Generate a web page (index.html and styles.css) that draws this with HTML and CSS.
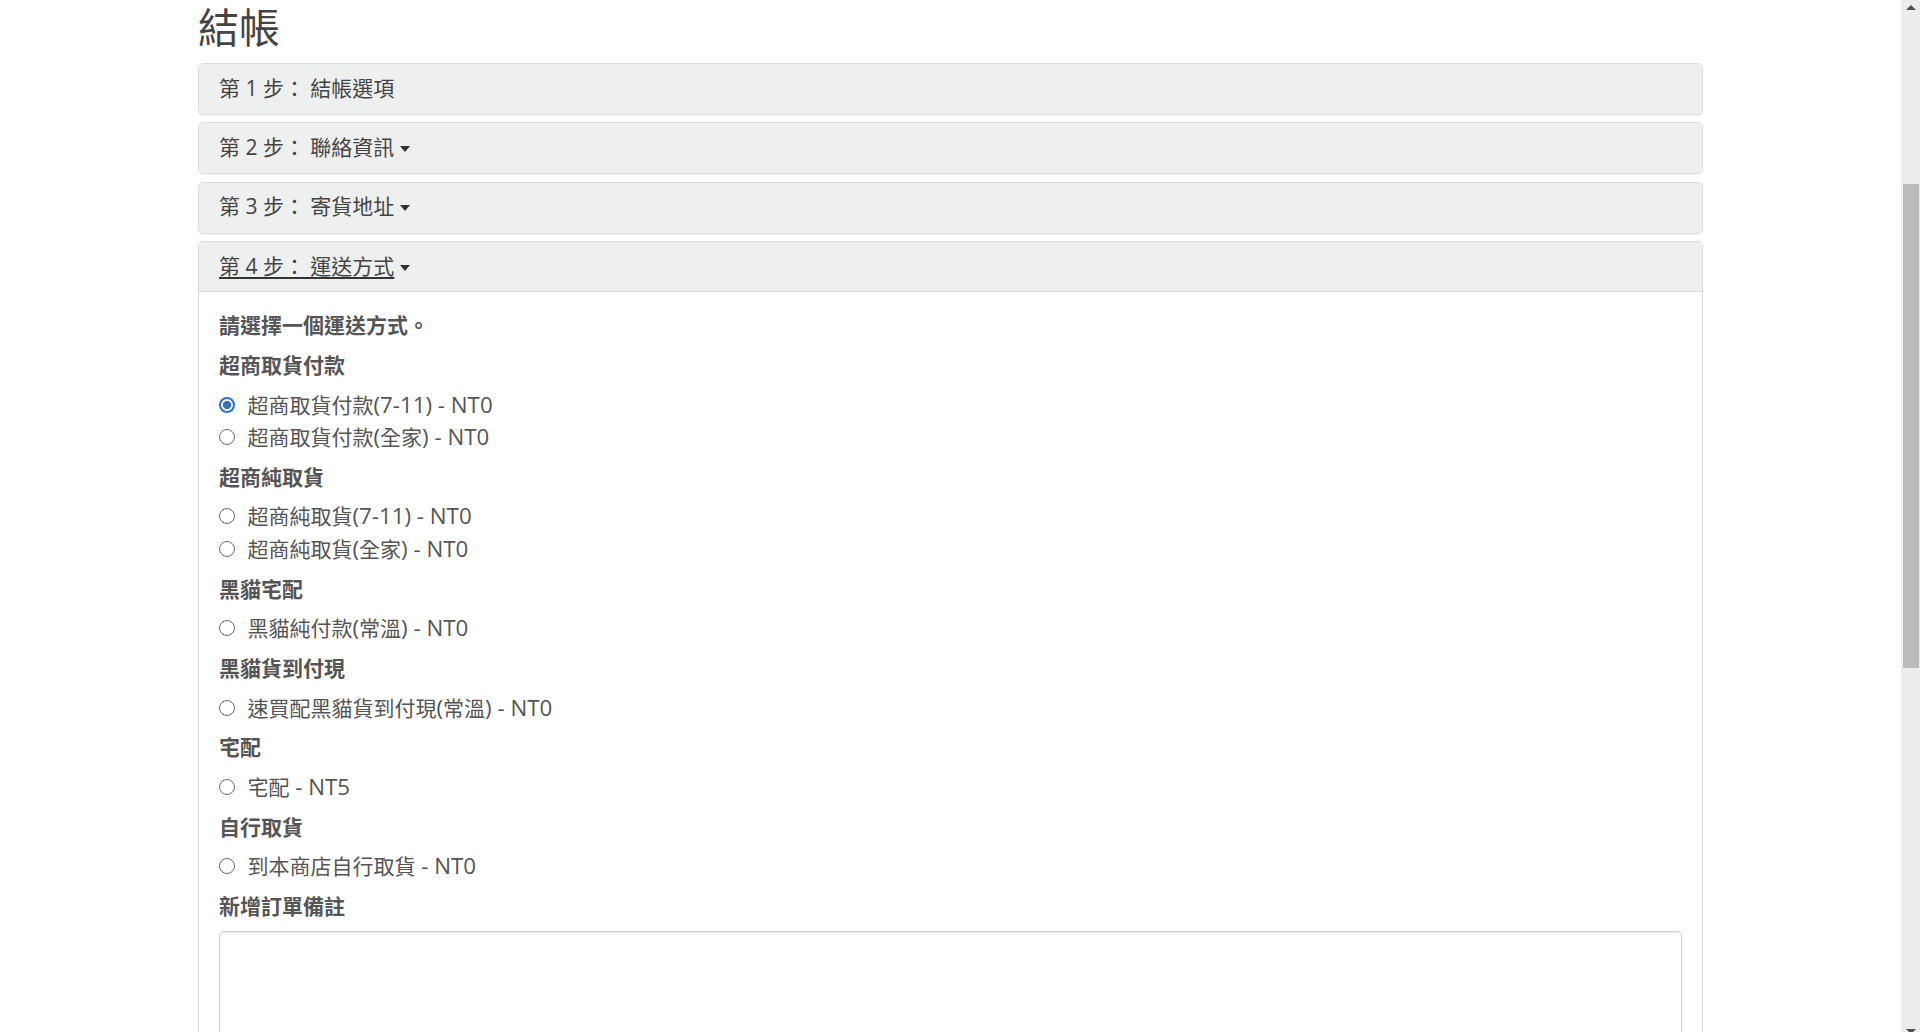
FILE: index.html
```html
<!DOCTYPE html>
<html lang="zh-Hant">
<head>
<meta charset="utf-8">
<title>結帳</title>
<link rel="stylesheet" href="styles.css">
</head>
<body>
<div class="page">
  <main class="viewport">
    <div class="container">
      <h1 class="page-title">結帳</h1>
      <div class="panel-group">
        <div class="panel">
          <div class="panel-heading"><span class="panel-title">第 1 步： 結帳選項</span></div>
        </div>
        <div class="panel">
          <div class="panel-heading"><a class="panel-title">第 2 步： 聯絡資訊</a><i class="caret"></i></div>
        </div>
        <div class="panel">
          <div class="panel-heading"><a class="panel-title">第 3 步： 寄貨地址</a><i class="caret"></i></div>
        </div>
        <div class="panel panel-open">
          <div class="panel-heading"><a class="panel-title is-hover">第 4 步： 運送方式</a><i class="caret"></i></div>
          <div class="panel-body">
            <p class="line strong">請選擇一個運送方式。</p>

            <p class="line strong">超商取貨付款</p>
            <div class="radio-group">
              <label class="radio line"><input type="radio" name="shipping" checked><span>超商取貨付款<span class="latin">(7-11) - NT0</span></span></label>
              <label class="radio line"><input type="radio" name="shipping"><span>超商取貨付款<span class="latin">(</span>全家<span class="latin">) - NT0</span></span></label>
            </div>

            <p class="line strong">超商純取貨</p>
            <div class="radio-group">
              <label class="radio line"><input type="radio" name="shipping"><span>超商純取貨<span class="latin">(7-11) - NT0</span></span></label>
              <label class="radio line"><input type="radio" name="shipping"><span>超商純取貨<span class="latin">(</span>全家<span class="latin">) - NT0</span></span></label>
            </div>

            <p class="line strong">黑貓宅配</p>
            <div class="radio-group">
              <label class="radio line"><input type="radio" name="shipping"><span>黑貓純付款<span class="latin">(</span>常溫<span class="latin">) - NT0</span></span></label>
            </div>

            <p class="line strong">黑貓貨到付現</p>
            <div class="radio-group">
              <label class="radio line"><input type="radio" name="shipping"><span>速買配黑貓貨到付現<span class="latin">(</span>常溫<span class="latin">) - NT0</span></span></label>
            </div>

            <p class="line strong">宅配</p>
            <div class="radio-group">
              <label class="radio line"><input type="radio" name="shipping"><span>宅配<span class="latin"> - NT5</span></span></label>
            </div>

            <p class="line strong">自行取貨</p>
            <div class="radio-group">
              <label class="radio line"><input type="radio" name="shipping"><span>到本商店自行取貨<span class="latin"> - NT0</span></span></label>
            </div>

            <p class="line strong">新增訂單備註</p>
            <textarea class="comment" rows="8"></textarea>
          </div>
        </div>
      </div>
    </div>
  </main>
  <aside class="scrollbar" aria-hidden="true">
    <div class="sb-button"><i class="sb-arrow-up"></i></div>
    <div class="sb-track"><div class="sb-thumb"></div></div>
    <div class="sb-button"><i class="sb-arrow-down"></i></div>
  </aside>
</div>
</body>
</html>
```

FILE: styles.css
```css
* {
  box-sizing: border-box;
}

html,
body {
  margin: 0;
  height: 100%;
}

body {
  font-family: "Open Sans", "Noto Sans CJK TC", sans-serif;
  color: #555;
  background: #fff;
  overflow: hidden;
}

.page {
  display: flex;
  height: 100vh;
}

.viewport {
  flex: 1 1 auto;
  overflow: hidden;
}

.container {
  width: 1505px;
  margin: 0 auto;
}

.page-title {
  font-family: "Noto Sans CJK TC", sans-serif;
  font-size: 41px;
  font-weight: 400;
  line-height: 46px;
  height: 46px;
  margin: 2px 0 15px;
  color: #444;
}

.panel-group {
  display: flex;
  flex-direction: column;
  gap: 7.4px;
}

.panel {
  border: 1px solid #ddd;
  border-radius: 5px;
  background: #fff;
  box-shadow: 0 1px 1px rgba(0, 0, 0, 0.05);
  overflow: hidden;
}

.panel-heading {
  height: 50px;
  display: flex;
  align-items: center;
  padding: 0 20px 2px;
  background: #eeefef;
  border-bottom: 1px solid transparent;
  font-size: 21px;
  line-height: 30px;
  color: #444;
}

.panel-open .panel-heading {
  border-bottom-color: #ddd;
}

.panel-title {
  color: #444;
  text-decoration: none;
  white-space: pre;
}

.panel-title.is-hover {
  text-decoration: underline;
  text-decoration-thickness: 1.5px;
  text-decoration-color: #333;
  text-underline-offset: 3px;
}

.caret {
  width: 0;
  height: 0;
  border-left: 5.5px solid transparent;
  border-right: 5.5px solid transparent;
  border-top: 6px solid #333;
  margin-left: 6px;
  margin-top: 4px;
}

.panel-body {
  padding: 18px 20px 0;
}

.line {
  height: 30px;
  line-height: 30px;
  font-size: 21px;
  margin: 0;
  white-space: nowrap;
}

p.line {
  margin-bottom: 9.7px;
}

.strong {
  font-weight: 700;
  color: #555;
}

.radio-group {
  display: flex;
  flex-direction: column;
  gap: 2.5px;
  margin-bottom: 9.7px;
}

.radio {
  display: flex;
  align-items: center;
  gap: 13px;
  color: #555;
}

.latin {
  font-size: 22.3px;
}

.radio input {
  appearance: none;
  -webkit-appearance: none;
  width: 16px;
  height: 16px;
  margin: 0 0 0 -0.5px;
  border: 1.7px solid #6a6a6a;
  border-radius: 50%;
  background: #fff;
  flex: 0 0 16px;
}

.radio input:checked {
  border: 2px solid #2f6fc2;
  background: radial-gradient(circle, #2f6fc2 0 3.8px, #fff 4.4px);
}

.comment {
  display: block;
  width: 100%;
  height: 220px;
  margin-top: 1px;
  border: 1px solid #ccc;
  border-radius: 5px;
  box-shadow: inset 0 1px 1px rgba(0, 0, 0, 0.075);
  resize: none;
  font: inherit;
}

.scrollbar {
  flex: 0 0 19px;
  width: 19px;
  height: 100vh;
  background: #ececec;
  display: flex;
  flex-direction: column;
}

.sb-button {
  height: 17px;
  flex: 0 0 17px;
  display: flex;
  justify-content: center;
  align-items: center;
  padding-left: 1px;
}

.sb-arrow-up {
  width: 0;
  height: 0;
  border-left: 5px solid transparent;
  border-right: 5px solid transparent;
  border-bottom: 5px solid #505050;
  margin-top: -3px;
}

.sb-arrow-down {
  width: 0;
  height: 0;
  border-left: 5px solid transparent;
  border-right: 5px solid transparent;
  border-top: 5px solid #505050;
  margin-top: 15px;
}

.sb-track {
  flex: 1 1 auto;
}

.sb-thumb {
  margin: 167px 1px 0 2px;
  height: 484px;
  background: #bcbcbc;
}
```
